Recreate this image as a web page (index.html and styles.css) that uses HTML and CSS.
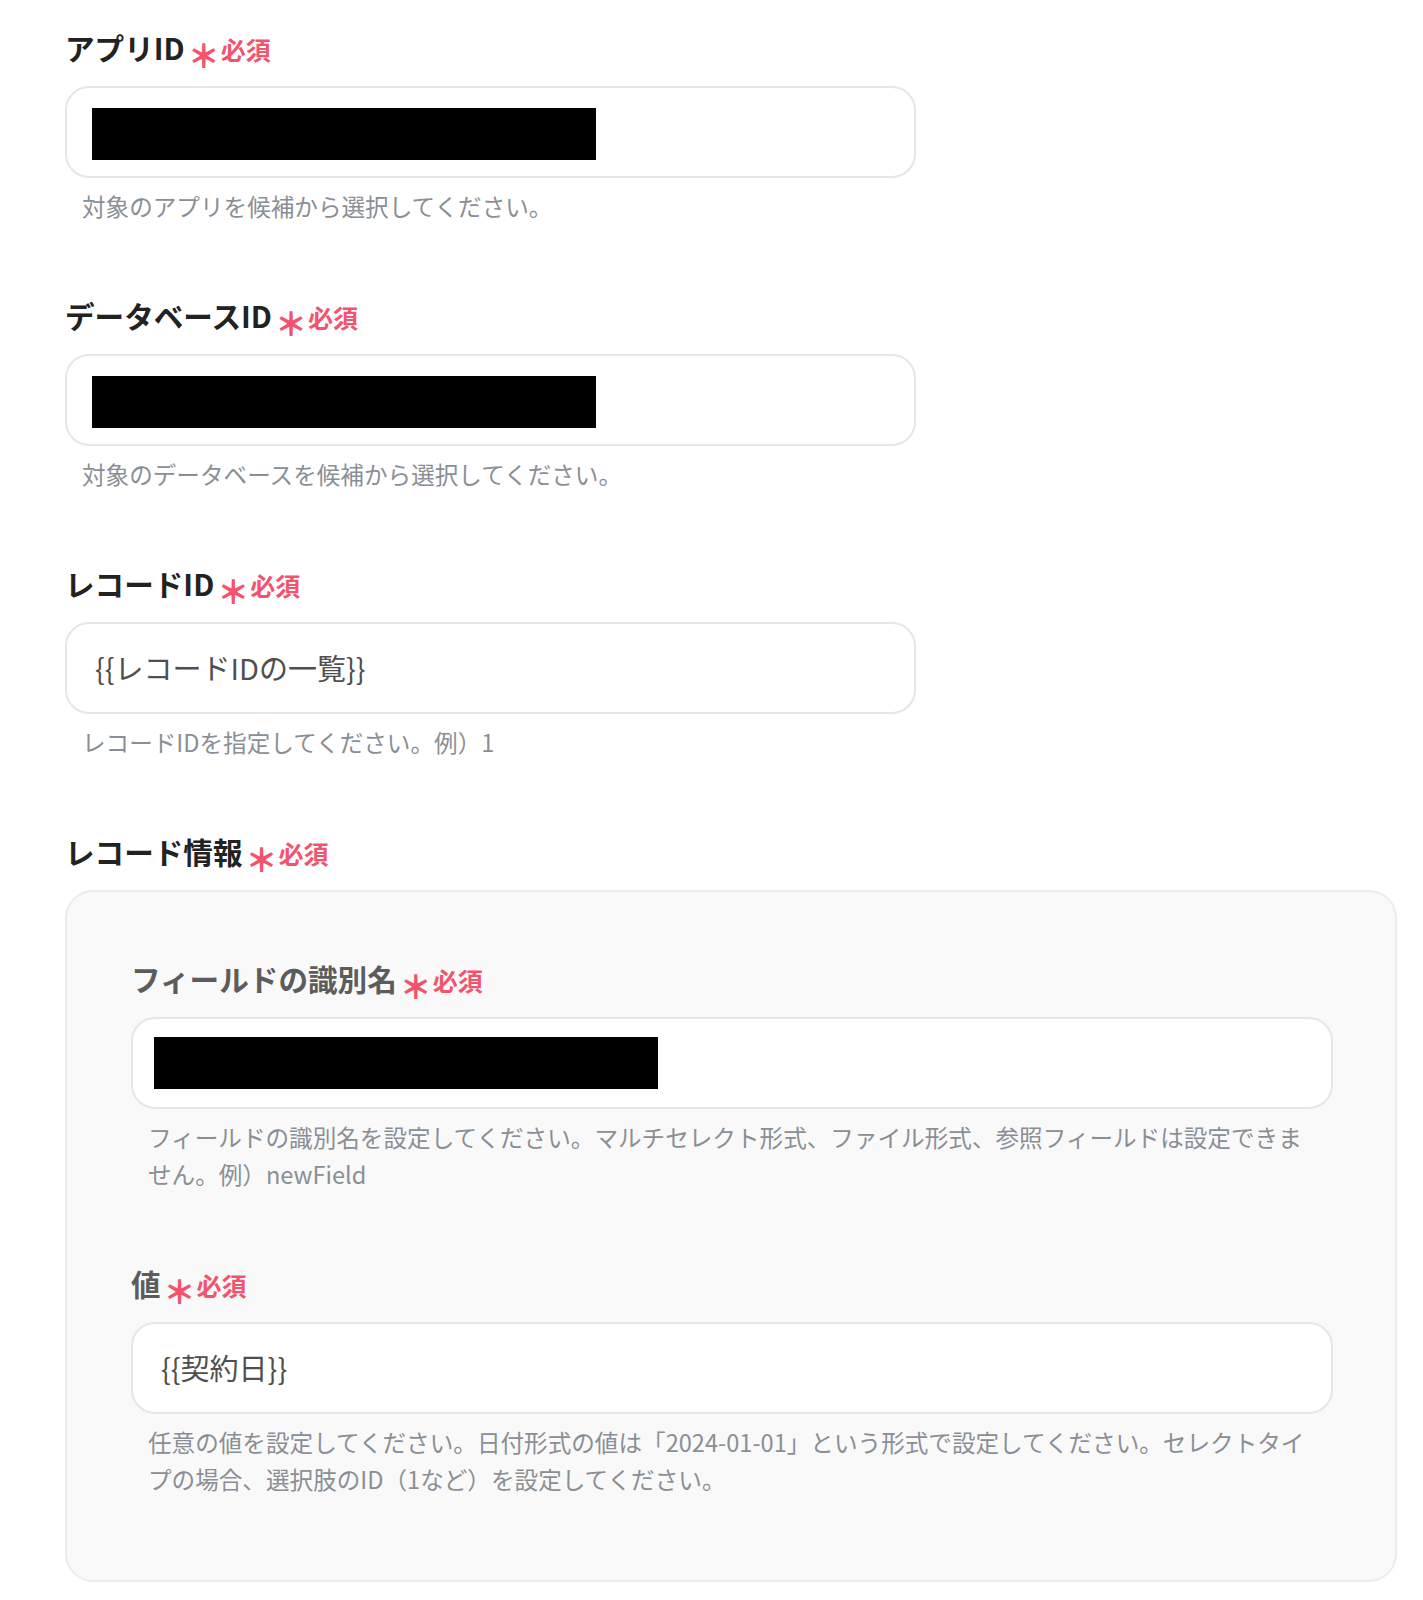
FILE: index.html
```html
<!DOCTYPE html>
<html lang="ja">
<head>
<meta charset="utf-8">
<title>レコード更新</title>
<link rel="stylesheet" href="styles.css">
</head>
<body>
<main class="form">
  <section class="field">
    <div class="label">アプリID<span class="req"><span class="star">＊</span>必須</span></div>
    <div class="input"><span class="redact"></span></div>
    <p class="help">対象のアプリを候補から選択してください。</p>
  </section>

  <section class="field">
    <div class="label">データベースID<span class="req"><span class="star">＊</span>必須</span></div>
    <div class="input"><span class="redact"></span></div>
    <p class="help">対象のデータベースを候補から選択してください。</p>
  </section>

  <section class="field">
    <div class="label">レコードID<span class="req"><span class="star">＊</span>必須</span></div>
    <div class="input"><span class="value">{{レコードIDの一覧}}</span></div>
    <p class="help">レコードIDを指定してください。例）1</p>
  </section>

  <section class="field">
    <div class="label">レコード情報<span class="req"><span class="star">＊</span>必須</span></div>
    <div class="group">
      <section class="field">
        <div class="label sub">フィールドの識別名<span class="req"><span class="star">＊</span>必須</span></div>
        <div class="input"><span class="redact"></span></div>
        <p class="help">フィールドの識別名を設定してください。マルチセレクト形式、ファイル形式、参照フィールドは設定できません。例）newField</p>
      </section>
      <section class="field">
        <div class="label sub">値<span class="req"><span class="star">＊</span>必須</span></div>
        <div class="input"><span class="value">{{契約日}}</span></div>
        <p class="help">任意の値を設定してください。日付形式の値は「2024-01-01」という形式で設定してください。セレクトタイプの場合、選択肢のID（1など）を設定してください。</p>
      </section>
    </div>
  </section>
</main>
</body>
</html>
```

FILE: styles.css
```css
* { box-sizing: border-box; }

html, body {
  margin: 0;
  padding: 0;
  background: #ffffff;
}

body {
  font-family: "Noto Sans CJK JP", "Noto Sans", sans-serif;
  color: #222222;
}

.form {
  display: flex;
  flex-direction: column;
  gap: 71px;
  padding: 28px 0 0 65px;
}

.field {
  display: flex;
  flex-direction: column;
}

.label {
  display: flex;
  align-items: center;
  height: 40px;
  font-size: 29.6px;
  line-height: 40px;
  font-weight: 700;
  color: #222222;
  margin-bottom: 18px;
  white-space: nowrap;
}

.label.sub {
  color: #5c5c5c;
}

.req {
  display: flex;
  align-items: center;
  color: #f3536d;
  font-size: 25px;
  line-height: 1;
  font-weight: 700;
  margin-left: 3px;
  padding-top: 2px;
}

.star {
  display: block;
  flex: 0 0 32px;
  width: 32px;
  font-size: 32px;
  line-height: 1.25;
  font-weight: 900;
  text-align: center;
  margin-top: 10px;
  margin-right: 1px;
}

.input {
  width: 851px;
  height: 92px;
  background: #ffffff;
  border: 2px solid #e3e6ea;
  border-radius: 24px;
  display: flex;
  align-items: center;
  padding-left: 28px;
}

.redact {
  display: block;
  width: 504px;
  height: 52px;
  background: #000000;
  margin-left: -3px;
  margin-top: 4px;
}

.value {
  font-size: 29px;
  color: #4f4f4f;
  line-height: 40px;
  margin-top: -3px;
}

.help {
  margin: 10px 0 0 0;
  padding-left: 17px;
  font-size: 23.6px;
  line-height: 37px;
  color: #8a8f95;
}

.group {
  width: 1332px;
  background: #f9f9f9;
  border: 2px solid #ececec;
  border-radius: 28px;
  padding: 67px 62px 82px 64px;
  display: flex;
  flex-direction: column;
  gap: 71px;
}

.group .input {
  width: 100%;
}

.group .redact {
  margin-left: -7px;
  margin-top: 0;
}

.group .help {
  padding-right: 16px;
}
```
